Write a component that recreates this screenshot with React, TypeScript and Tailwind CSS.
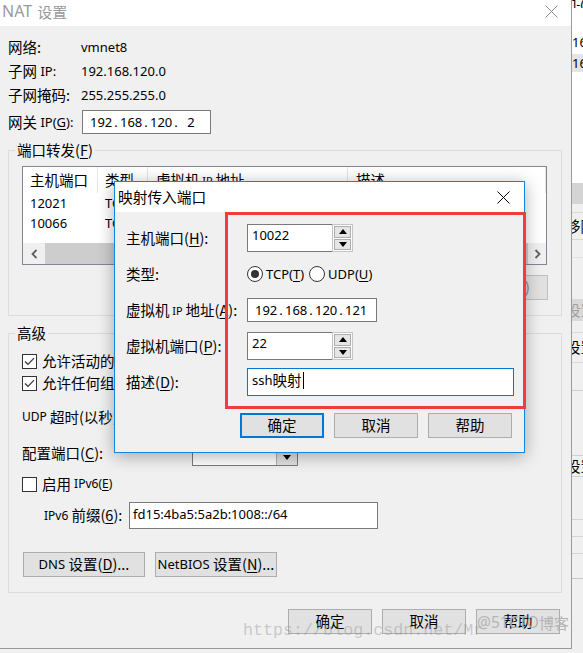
import React from "react";

type Kids = { children?: React.ReactNode };

function C({ children, className = "text-[14.5px]" }: Kids & { className?: string }) {
  return (
    <span className={"font-['Noto_Sans_CJK_SC',sans-serif] leading-none " + className}>
      {children}
    </span>
  );
}

function U({ children }: Kids) {
  return <span className="underline underline-offset-[2px] decoration-1">{children}</span>;
}

function Btn({ children, className = "" }: Kids & { className?: string }) {
  return (
    <div className={"h-[25px] flex items-center justify-center bg-[#e1e1e1] " + className}>
      {children}
    </div>
  );
}

function Check({ on }: { on?: boolean }) {
  return (
    <div className="w-[15px] h-[15px] border border-[#333333] bg-white flex items-center justify-center shrink-0">
      {on && (
        <svg width="11" height="9" viewBox="0 0 11 9">
          <path d="M1 4.5 L4 7.5 L10 1.2" fill="none" stroke="#333333" strokeWidth="1.2" />
        </svg>
      )}
    </div>
  );
}

function Radio({ on }: { on?: boolean }) {
  return (
    <div className="w-[16px] h-[16px] rounded-full border border-[#333333] bg-white flex items-center justify-center shrink-0">
      {on && <div className="w-[8px] h-[8px] rounded-full bg-[#333333]" />}
    </div>
  );
}

function IP({ parts }: { parts: string[] }) {
  return (
    <div className="flex items-center">
      {parts.map((p, i) => (
        <React.Fragment key={i}>
          <span className="w-[22px] text-center">{p}</span>
          {i < 3 && <span className="w-[8px] text-center">.</span>}
        </React.Fragment>
      ))}
    </div>
  );
}

function Tri({ down }: { down?: boolean }) {
  return (
    <svg width="8" height="5" viewBox="0 0 8 5">
      <path d={down ? "M0 0 L8 0 L4 5 Z" : "M0 5 L8 5 L4 0 Z"} fill="#000000" />
    </svg>
  );
}

function Spin({ value }: { value: string }) {
  return (
    <div className="flex h-[28px]">
      <div className="w-[86px] h-full border border-[#7a7a7a] bg-white flex items-center pl-[4px] pb-[5px]">
        {value}
      </div>
      <div className="w-[21px] h-full flex flex-col gap-[1px] border border-[#c4c4c4] bg-white p-[1px] -ml-[1px]">
        <div className="flex-1 bg-[#e5e5e5] border border-[#adadad] flex items-center justify-center">
          <Tri />
        </div>
        <div className="flex-1 bg-[#e5e5e5] border border-[#adadad] flex items-center justify-center">
          <Tri down />
        </div>
      </div>
    </div>
  );
}

function XIcon({ color }: { color: string }) {
  return (
    <svg width="13" height="13" viewBox="0 0 13 13">
      <path d="M0.5 0.5 L12.5 12.5 M12.5 0.5 L0.5 12.5" stroke={color} strokeWidth="1" />
    </svg>
  );
}

function Chevron({ right }: { right?: boolean }) {
  return (
    <svg width="7" height="10" viewBox="0 0 7 10">
      <path d={right ? "M1.5 1 L5.5 5 L1.5 9" : "M5.5 1 L1.5 5 L5.5 9"} fill="none" stroke="#606060" strokeWidth="1.8" />
    </svg>
  );
}

function MainWindow() {
  return (
    <div className="flex flex-col w-[572px] h-[649px] shrink-0 border-r border-b border-[#9a9a9a] bg-[#f0f0f0]">
      {/* title bar */}
      <div className="h-[26px] bg-white flex items-center justify-between pb-[4px]">
        <div className="pl-[2px] text-[#9a9a9a] flex items-center gap-[5px]">
          <span className="text-[16px]">NAT</span>
          <C className="text-[15px]">设置</C>
        </div>
        <div className="mr-[13px] mt-[1px]">
          <XIcon color="#8a8a8a" />
        </div>
      </div>

      {/* body */}
      <div className="flex-1 px-[8px]">
        <div className="mt-[9px]">
          <div className="flex items-center h-[24px]">
            <div className="w-[73px]"><C>网络:</C></div>
            <span>vmnet8</span>
          </div>
          <div className="flex items-center h-[24px]">
            <div className="w-[73px] flex items-center"><C>子网</C><span>&nbsp;IP:</span></div>
            <span>192.168.120.0</span>
          </div>
          <div className="flex items-center h-[24px]">
            <div className="w-[73px]"><C>子网掩码:</C></div>
            <span>255.255.255.0</span>
          </div>
        </div>
        <div className="flex items-center h-[24px] mt-[3px]">
          <div className="w-[74px] flex items-center">
            <C>网关</C>
            <span>&nbsp;IP(<U>G</U>):</span>
          </div>
          <div className="w-[129px] h-[24px] border border-[#7a7a7a] bg-white flex items-center pl-[7px]">
            <IP parts={["192", "168", "120", "2"]} />
          </div>
        </div>

        {/* 端口转发 group */}
        <div className="relative mt-[16px] w-[554px] h-[166px] border border-[#dcdcdc]">
          <div className="absolute left-[6px] -top-[8px] px-[2px] bg-[#f0f0f0] flex items-center">
            <C>端口转发(<U>F</U>)</C>
          </div>
          <div className="ml-[13px] mt-[15px] w-[525px] h-[99px] border border-[#828790] bg-white flex flex-col">
            <div className="h-[26px] flex shrink-0">
              <div className="w-[75px] pl-[7px] border-r border-[#e5e5e5] flex items-center"><C>主机端口</C></div>
              <div className="w-[50px] pl-[7px] border-r border-[#e5e5e5] flex items-center"><C>类型</C></div>
              <div className="w-[200px] pl-[8px] border-r border-[#e5e5e5] flex items-center">
                <C>虚拟机</C><span className="text-[11px]">&nbsp;IP&nbsp;</span><C>地址</C>
              </div>
              <div className="flex-1 pl-[8px] border-r border-[#e5e5e5] flex items-center"><C>描述</C></div>
            </div>
            <div className="h-[20px] flex items-center shrink-0">
              <div className="w-[75px] pl-[7px]">12021</div>
              <div className="w-[50px] pl-[7px]">TCP</div>
            </div>
            <div className="h-[20px] flex items-center shrink-0">
              <div className="w-[75px] pl-[7px]">10066</div>
              <div className="w-[50px] pl-[7px]">TCP</div>
            </div>
            <div className="flex-1" />
            <div className="h-[21px] flex bg-[#f0f0f0] shrink-0">
              <div className="w-[22px] flex items-center justify-center"><Chevron /></div>
              <div className="flex-1 bg-[#cdcdcd]" />
              <div className="w-[18px] flex items-center justify-center"><Chevron right /></div>
            </div>
          </div>
          <div className="mt-[10px] flex justify-end gap-[10px] pr-[13px]">
            <Btn className="w-[84px] border border-[#adadad]"><C>添加(<U>A</U>)...</C></Btn>
            <Btn className="w-[84px] border border-[#bfbfbf] bg-[#cccccc] text-[#838383]"><C>移除(<U>R</U>)</C></Btn>
            <Btn className="w-[84px] border border-[#bfbfbf] bg-[#cccccc] text-[#838383]"><C>属性(<U>P</U>)</C></Btn>
          </div>
        </div>

        {/* 高级 group */}
        <div className="relative mt-[17px] w-[554px] h-[260px] border border-[#dcdcdc] pl-[13px]">
          <div className="absolute left-[6px] -top-[8px] px-[2px] bg-[#f0f0f0] flex items-center">
            <C>高级</C>
          </div>
          <div className="mt-[17px] h-[20px] flex items-center">
            <Check on />
            <div className="ml-[5px]"><C>允许活动的</C> FTP(<U>T</U>)</div>
          </div>
          <div className="mt-[2px] h-[20px] flex items-center">
            <Check on />
            <div className="ml-[5px]"><C>允许任何组织唯一标识符(<U>O</U>)</C></div>
          </div>
          <div className="mt-[14px] h-[20px] flex items-center">
            <span className="text-[12px]">UDP&nbsp;</span><C>超时(以秒为单位)(<U>U</U>):</C>
          </div>
          <div className="mt-[13px] h-[26px] flex items-center">
            <div className="w-[170px]"><C>配置端口(<U>C</U>):</C></div>
            <div className="w-[106px] h-[26px] border border-[#7a7a7a] bg-white flex">
              <div className="flex-1" />
              <div className="w-[21px] h-full bg-[#e1e1e1] border-l border-[#adadad] flex items-center justify-center pt-[8px]">
                <Tri down />
              </div>
            </div>
          </div>
          <div className="mt-[8px] h-[20px] flex items-center">
            <Check />
            <div className="ml-[5px] flex items-center"><C>启用</C><span className="text-[12px]">&nbsp;IPv6(<U>E</U>)</span></div>
          </div>
          <div className="mt-[8px] h-[27px] flex items-center ml-[22px]">
            <div className="w-[85px] flex items-center">
              <span className="text-[12px]">IPv6&nbsp;</span><C>前缀(<U>6</U>):</C>
            </div>
            <div className="w-[249px] h-[27px] border border-[#7a7a7a] bg-white flex items-center pl-[3px] pb-[3px]">
              fd15:4ba5:5a2b:1008::/64
            </div>
          </div>
          <div className="mt-[23px] ml-[1px] flex gap-[10px]">
            <Btn className="w-[122px] border border-[#adadad]">
              <span>DNS&nbsp;</span><C>设置(<U>D</U>)...</C>
            </Btn>
            <Btn className="w-[122px] border border-[#adadad]">
              <span>NetBIOS&nbsp;</span><C>设置(<U>N</U>)...</C>
            </Btn>
          </div>
        </div>

        {/* bottom buttons */}
        <div className="mt-[16px] pl-[280px] flex gap-[10px]">
          <Btn className="w-[84px] border border-[#adadad]"><C>确定</C></Btn>
          <Btn className="w-[84px] border border-[#adadad]"><C>取消</C></Btn>
          <Btn className="w-[84px] border border-[#adadad]"><C>帮助</C></Btn>
        </div>
      </div>
    </div>
  );
}

function Strip() {
  return (
    <div className="flex-1 h-full flex flex-col overflow-hidden whitespace-nowrap">
      <div className="h-[183px] bg-white flex flex-col shrink-0">
        <div className="h-[8px] overflow-hidden flex items-end">
          <span className="-mb-[3px]">]-(</span>
        </div>
        <div className="mt-[26px] h-[16px] flex items-center">16</div>
        <div className="mt-[4px] h-[18px] bg-[#e5e5e5] flex items-center">16</div>
      </div>
      <div className="h-[21px] bg-[#d4d4d4] shrink-0" />
      <div className="flex-1 bg-[#f0f0f0] flex flex-col">
        <div className="h-[9px] border-b border-[#d9d9d9]" />
        <div className="h-[27px] border-b border-[#d9d9d9] flex items-center -ml-[6px]"><C>移除</C></div>
        <div className="h-[18px] border-b border-[#e3e3e3]" />
        <div className="mt-[41px] h-[22px] bg-[#d9d9d9] flex items-center -ml-[6px] text-[#a0a0a0]"><C>设置</C></div>
        <div className="mt-[11px] h-[31px] border-t border-[#d9d9d9] border-b flex items-center -ml-[6px]"><C>设置</C></div>
        <div className="mt-[27px] h-[1px] bg-[#cfcfcf]" />
        <div className="mt-[64px] h-[22px] border-t border-b border-[#d0d0d0] flex items-center -ml-[6px]"><C>设置</C></div>
        <div className="mt-[42px] h-[1px] bg-[#d5d5d5]" />
        <div className="mt-[16px] h-[1px] bg-[#d5d5d5]" />
        <div className="mt-[16px] h-[1px] bg-[#d5d5d5]" />
        <div className="mt-[24px] h-[1px] bg-[#c8c8c8]" />
      </div>
    </div>
  );
}

function Dialog() {
  return (
    <div className="absolute left-[114px] top-[181px] w-[411px] h-[272px] border border-[#1883d7] bg-[#f0f0f0] shadow-[0_3px_16px_rgba(0,0,0,0.32)] flex flex-col">
      <div className="h-[30px] bg-white flex items-center justify-between pl-[3px] pr-[14px] shrink-0">
        <C className="text-[14.7px]">映射传入端口</C>
        <XIcon color="#000000" />
      </div>
      <div className="pl-[11px] flex flex-col">
        <div className="mt-[12px] h-[28px] flex items-center">
          <div className="w-[121px]"><C>主机端口(<U>H</U>):</C></div>
          <Spin value="10022" />
        </div>
        <div className="mt-[10px] h-[24px] flex items-center">
          <div className="w-[121px]"><C>类型:</C></div>
          <Radio on />
          <span className="ml-[3px]">TCP(<U>T</U>)</span>
          <div className="ml-[5px]"><Radio /></div>
          <span className="ml-[3px]">UDP(<U>U</U>)</span>
        </div>
        <div className="mt-[12px] h-[24px] flex items-center">
          <div className="w-[121px] flex items-center">
            <C>虚拟机</C><span className="text-[11px]">&nbsp;IP&nbsp;</span><C>地址(<U>A</U>):</C>
          </div>
          <div className="w-[130px] h-[24px] border border-[#7a7a7a] bg-white flex items-center pl-[7px]">
            <IP parts={["192", "168", "120", "121"]} />
          </div>
        </div>
        <div className="mt-[10px] h-[28px] flex items-center">
          <div className="w-[121px]"><C>虚拟机端口(<U>P</U>):</C></div>
          <Spin value="22" />
        </div>
        <div className="mt-[8px] h-[28px] flex items-center">
          <div className="w-[121px]"><C>描述(<U>D</U>):</C></div>
          <div className="w-[267px] h-[28px] border border-[#0078d7] bg-white flex items-center pl-[4px] pb-[3px]">
            <span>ssh</span>
            <C>映射</C>
            <div className="w-[1px] h-[17px] bg-black ml-[1px]" />
          </div>
        </div>
        <div className="mt-[17px] pl-[114px] flex gap-[10px]">
          <Btn className="w-[84px] border-2 border-[#0078d7]"><C>确定</C></Btn>
          <Btn className="w-[84px] border border-[#adadad]"><C>取消</C></Btn>
          <Btn className="w-[84px] border border-[#adadad]"><C>帮助</C></Btn>
        </div>
      </div>
    </div>
  );
}

export default function App() {
  return (
    <div className="relative w-[583px] h-[653px] overflow-hidden bg-[#f0f0f0] font-['Noto_Sans','Noto_Sans_CJK_SC',sans-serif] text-[13px] leading-none text-black">
      <div className="flex h-full">
        <MainWindow />
        <Strip />
      </div>
      <Dialog />
      <div className="absolute left-[225px] top-[212px] w-[301px] h-[197px] border-[3px] border-[#f03c3c] pointer-events-none" />
      <div className="absolute left-[243px] top-[623px] font-['Liberation_Mono',monospace] text-[16.7px] leading-none text-[rgba(150,150,150,0.45)] whitespace-nowrap pointer-events-none">
        https://blog.csdn.net/Mr
      </div>
      <div className="absolute left-[477px] top-[615px] text-[15.5px] leading-none text-[#b4b4b4] whitespace-nowrap pointer-events-none flex items-center">
        <span>@51CTO</span>
        <C className="text-[15px]">博客</C>
      </div>
    </div>
  );
}
